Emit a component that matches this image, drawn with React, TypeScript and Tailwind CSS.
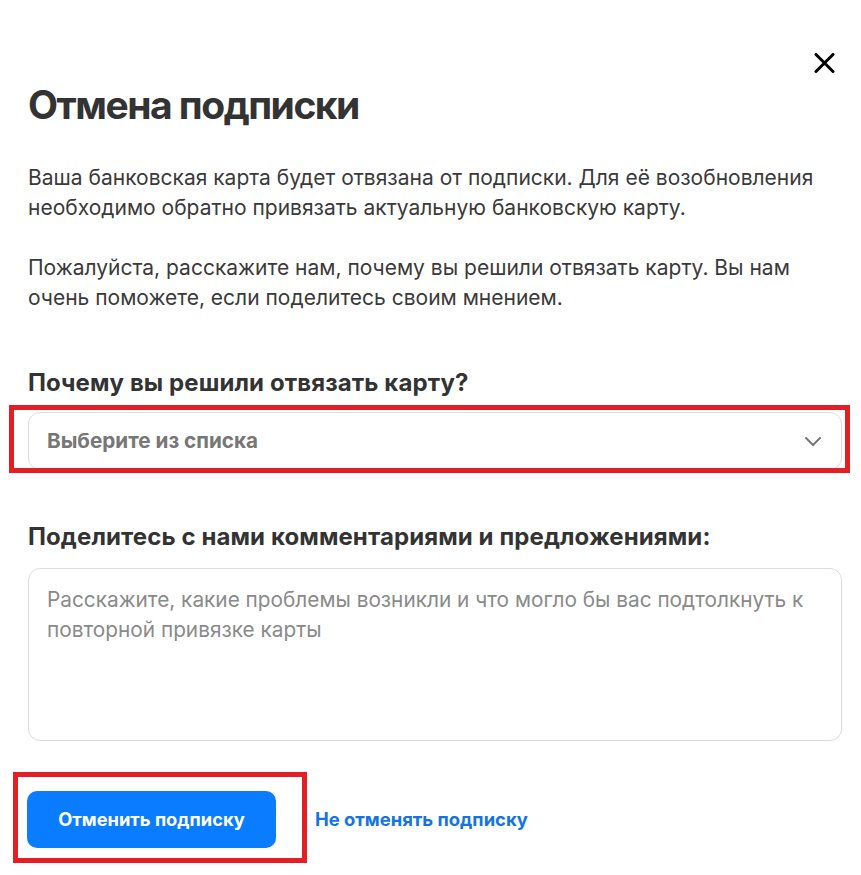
import React from "react";

export default function App() {
  return (
    <div
      className="relative w-[861px] h-[875px] bg-white text-[#333333]"
      style={{ fontFamily: "Inter, 'Noto Sans', sans-serif" }}
    >
      <div className="flex flex-col px-[28px]">
        <div className="flex justify-end pt-[53px] -mr-[2px]">
          <button className="w-[21px] h-[20px] flex items-center justify-center" aria-label="Закрыть">
            <svg width="21" height="20" viewBox="0 0 21 20" fill="none">
              <path d="M2 1.5L19 18.5M19 1.5L2 18.5" stroke="#000" strokeWidth="3" strokeLinecap="round" />
            </svg>
          </button>
        </div>
        <h1 className="mt-[8px] text-[39px] leading-[48px] font-bold text-[#333333] tracking-[-1.5px]">
          Отмена подписки
        </h1>
        <p className="mt-[34px] text-[21px] leading-[30px] text-[#3a3a3a]">
          Ваша банковская карта будет отвязана от подписки. Для её возобновления
          <br />
          необходимо обратно привязать актуальную банковскую карту.
        </p>
        <p className="mt-[30px] text-[21px] leading-[30px] text-[#3a3a3a]">
          Пожалуйста, расскажите нам, почему вы решили отвязать карту. Вы нам
          <br />
          очень поможете, если поделитесь своим мнением.
        </p>
        <h2 className="mt-[54px] text-[24px] leading-[32px] font-bold text-[#333333] tracking-[0.1px]">
          Почему вы решили отвязать карту?
        </h2>
        <div className="relative mt-[13px] w-[814px] h-[58px]">
          <div className="h-full flex items-center justify-between pl-[18px] pr-[20px] border border-[#dcdcdc] rounded-[12px] bg-white">
            <span className="text-[20.7px] font-bold text-[#777777]">Выберите из списка</span>
            <svg width="16" height="9" viewBox="0 0 16 9" fill="none">
              <path d="M1 1L8 8L15 1" stroke="#777777" strokeWidth="2" strokeLinecap="round" strokeLinejoin="round" />
            </svg>
          </div>
          <div className="absolute left-[-19px] top-[-7px] w-[841px] h-[68px] border-[5px] border-[#e31e24] pointer-events-none" />
        </div>
        <h2 className="mt-[51px] text-[24px] leading-[32px] font-bold text-[#333333] tracking-[0.1px]">
          Поделитесь с нами комментариями и предложениями:
        </h2>
        <div className="mt-[15px] w-[814px] h-[173px] border border-[#dcdcdc] rounded-[12px] pt-[16px] pl-[18px] pr-[18px]">
          <p className="text-[20.8px] leading-[30px] text-[#8a8a8a]">
            Расскажите, какие проблемы возникли и что могло бы вас подтолкнуть к
            <br />
            повторной привязке карты
          </p>
        </div>
        <div className="mt-[50px] flex items-center gap-[39px]">
          <div className="relative -ml-[1px]">
            <button className="w-[249px] h-[57px] rounded-[10px] bg-[#0a7cff] text-white text-[18.3px] font-bold">
              Отменить подписку
            </button>
            <div className="absolute left-[-14px] top-[-19px] w-[294px] h-[91px] border-[5px] border-[#e31e24] pointer-events-none" />
          </div>
          <a className="text-[18.4px] font-bold text-[#1473e6]">Не отменять подписку</a>
        </div>
      </div>
    </div>
  );
}
